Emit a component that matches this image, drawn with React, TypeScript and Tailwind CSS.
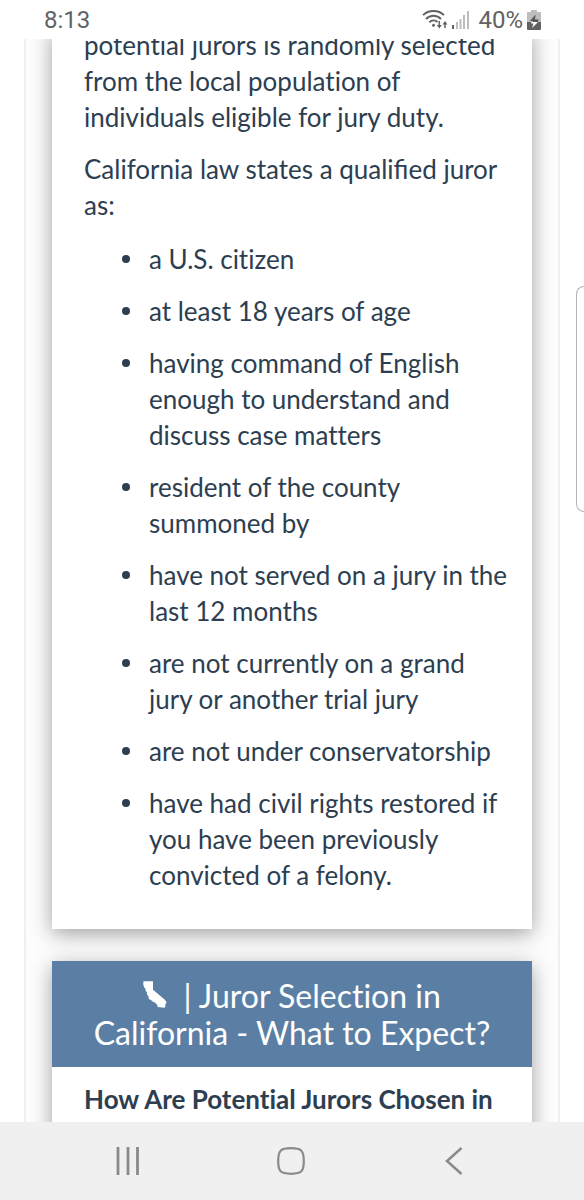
import React from "react";

const qualifications = [
  "a U.S. citizen",
  "at least 18 years of age",
  "having command of English enough to understand and discuss case matters",
  "resident of the county summoned by",
  "have not served on a jury in the last 12 months",
  "are not currently on a grand jury or another trial jury",
  "are not under conservatorship",
  "have had civil rights restored if you have been previously convicted of a felony.",
];

const WifiIcon = () => (
  <svg width="26" height="20" viewBox="0 0 26 20" fill="none" stroke="#626262" strokeWidth="1.9">
    <path d="M1 5.2 C6.5 -0.4 16.500 -0.4 22 5.200" />
    <path d="M4 9 C8 4.600 15 4.600 19 9" />
    <path d="M7.300 12.300 C9.500 9.800 13.500 9.800 15.500 12" />
    <circle cx="11.500" cy="15.300" r="1.500" fill="#626262" stroke="none" />
    <path d="M17.300 11 V17 M23 18 V12" strokeWidth="1.500" />
    <path d="M14.800 15 H19.800 L17.300 18.500 Z M20.500 14.500 H25.500 L23 11 Z" fill="#626262" stroke="none" />
  </svg>
);

const SignalIcon = () => (
  <svg width="18" height="18" viewBox="0 0 18 18">
    <rect x="0" y="14" width="2" height="4" fill="#626262" />
    <rect x="4" y="11" width="2" height="7" fill="#bdbdbd" />
    <rect x="7.500" y="8" width="2" height="10" fill="#bdbdbd" />
    <rect x="11" y="4" width="2" height="14" fill="#bdbdbd" />
    <rect x="15" y="0" width="2" height="18" fill="#bdbdbd" />
  </svg>
);

const BatteryIcon = () => (
  <svg width="14" height="20" viewBox="0 0 14 20">
    <path d="M4 0 H10 V2 H13 Q14 2 14 3 V12 H0 V3 Q0 2 1 2 H4 Z" fill="#bdbdbd" />
    <path d="M0 12 H14 V19 Q14 20 13 20 H1 Q0 20 0 19 Z" fill="#626262" />
    <path d="M8.500 4.500 L3 11 H6 V12 H11 L11.500 9.500 H8 Z" fill="#555" />
    <path d="M6 12 H11 L5 18 L6.500 13.500 H4 L4.500 12 Z" fill="#fff" />
  </svg>
);

const CaliforniaIcon = () => (
  <svg className="inline-block align-baseline" width="24" height="27" viewBox="0 0 24 27" fill="#fff">
    <path d="M0.500 0.300 H10 V8.700 L21.300 18.200 L22 19 L23.600 21.200 L23 22.500 L22.200 23.800 L22.500 25.500 L21.500 26.700 L14.700 26 L14 23.500 L11.800 21.500 L9.500 20.500 L8 19 L5.800 18 L5.500 15.500 L3.800 13 L4 11.500 L2.500 9.500 L2.600 8 L1 6 L0.200 3 Z" />
  </svg>
);

const StatusBar = () => (
  <header className="flex h-[39px] shrink-0 items-center justify-between bg-white pr-[43px] pl-11 font-['Roboto',sans-serif] text-2xl text-[#626262]">
    <time>8:13</time>
    <div className="flex items-center">
      <WifiIcon />
      <div className="ml-1">
        <SignalIcon />
      </div>
      <span className="ml-2">40%</span>
      <div className="ml-1">
        <BatteryIcon />
      </div>
    </div>
  </header>
);

const NavBar = () => (
  <nav className="grid h-[78px] shrink-0 grid-cols-3 items-center bg-[#f0f0f0] pr-[49px] pl-[46px]">
    <button type="button" aria-label="Recent apps" className="flex justify-center">
      <svg width="24" height="28" viewBox="0 0 24 28" stroke="#8a8a8a" strokeWidth="2.800">
        <path d="M2 0 V28 M12 0 V28 M21.500 0 V28" />
      </svg>
    </button>
    <button type="button" aria-label="Home" className="flex justify-center">
      <svg width="28" height="28" viewBox="0 0 28 28" fill="none" stroke="#8a8a8a" strokeWidth="2.200">
        <path d="M14 1.200 C24.500 1.200 26.800 3.500 26.800 14 C26.800 24.500 24.500 26.800 14 26.800 C3.500 26.800 1.200 24.500 1.200 14 C1.200 3.500 3.500 1.200 14 1.200 Z" />
      </svg>
    </button>
    <button type="button" aria-label="Back" className="flex justify-center">
      <svg width="18" height="28" viewBox="0 0 18 28" fill="none" stroke="#8a8a8a" strokeWidth="2.500">
        <path d="M16.500 1 L2 14 L16.500 27" />
      </svg>
    </button>
  </nav>
);

export default function App() {
  return (
    <div className="relative flex h-screen flex-col bg-white font-['Lato',sans-serif] text-[26px] leading-9 text-[#2c3e50] [font-variant-ligatures:no-common-ligatures]">
      <StatusBar />
      <main className="min-h-0 flex-1 overflow-hidden">
        <div className="mx-6 h-full overflow-hidden border-x-2 border-[#f0f0f0] bg-[#fdfdfd] px-[26px]">
          <section className="-mt-3 bg-white pr-6 pb-9 pl-8 shadow-[0_5px_20px_rgba(0,0,0,0.37)]">
            <p className="mb-4">
              potential jurors is randomly selected from the local population of individuals eligible for jury duty.
            </p>
            <p className="mb-[18px] [font-variant-ligatures:normal]">California law states a qualified juror as:</p>
            <ul className="space-y-4 pl-[65px]">
              {qualifications.map((item) => (
                <li
                  key={item}
                  className="relative before:absolute before:top-[14px] before:-left-[27px] before:size-2 before:rounded-full before:bg-[#2c3e50]"
                >
                  {item}
                </li>
              ))}
            </ul>
          </section>
          <section className="mt-8 bg-white shadow-[0_5px_20px_rgba(0,0,0,0.37)]">
            <h2 className="bg-[#5b7fa4] px-8 py-4 text-center text-[32px] leading-[37px] text-white">
              <CaliforniaIcon />
              &nbsp; | Juror Selection in California - What to Expect?
            </h2>
            <div className="px-8 pt-3.5">
              <h3 className="font-bold">How Are Potential Jurors Chosen in California?</h3>
            </div>
          </section>
        </div>
      </main>
      <NavBar />
      {/* edge panel handle */}
      <div className="absolute top-[286px] right-0 h-[226px] w-2 rounded-l-lg border border-r-0 border-[#b5b5b5] bg-white" />
    </div>
  );
}
